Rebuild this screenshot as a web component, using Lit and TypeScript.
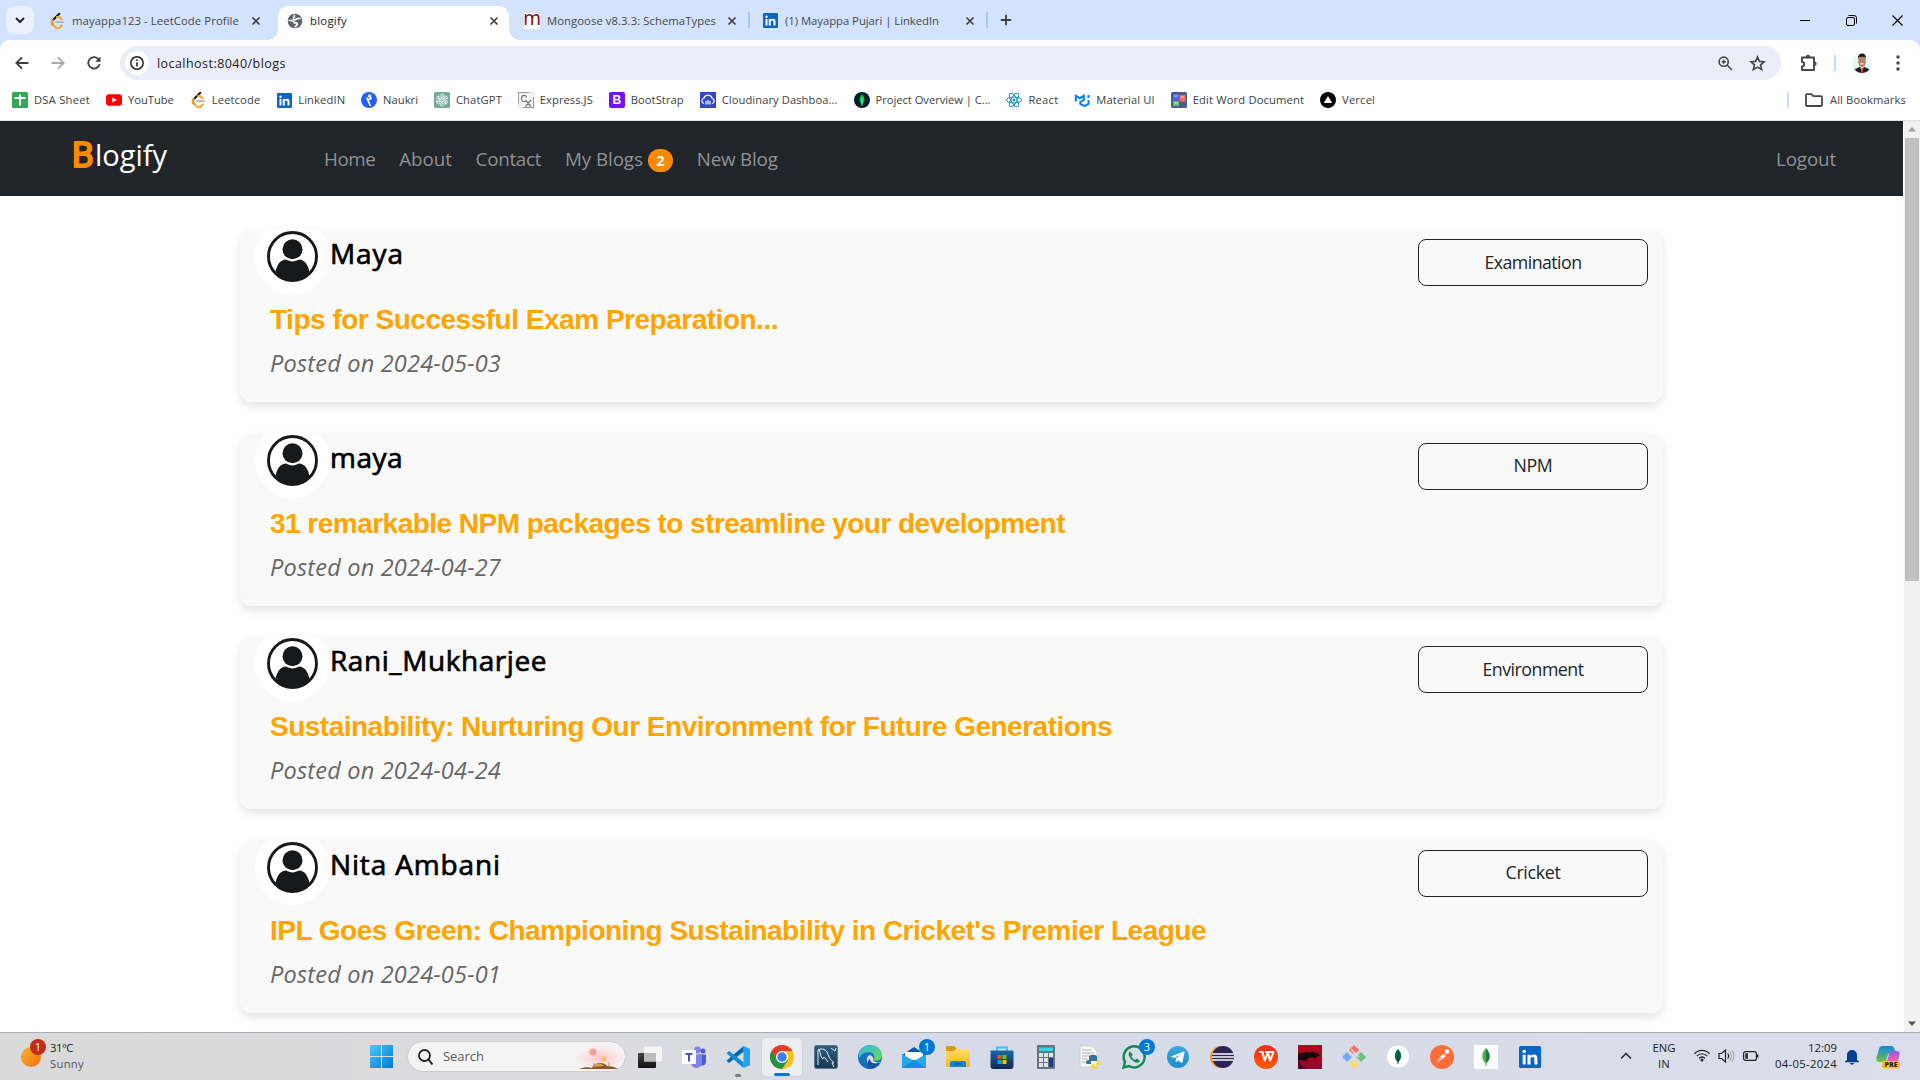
import { LitElement, html, css, svg, nothing, TemplateResult } from "lit";
import { customElement, property } from "lit/decorators.js";
import { styleMap } from "lit/directives/style-map.js";

/* Text set to an exact measure by spreading the remainder over its letters. */
@customElement("fit-text")
class FitText extends LitElement {
  @property() text = "";
  @property({ type: Number }) w = 0;
  static styles = css`
    :host { display: inline-block; white-space: pre; flex: none; }
  `;
  render() {
    return html`<span>${this.text}</span>`;
  }
  updated() {
    const s = this.renderRoot.querySelector("span") as HTMLElement;
    s.style.letterSpacing = "0px";
    const natural = s.getBoundingClientRect().width;
    s.style.letterSpacing = `${(this.w - natural) / this.text.length}px`;
    this.style.width = `${this.w}px`;
  }
}

const ic = (w: number, h: number, box: string, body: TemplateResult) =>
  html`<svg width=${w} height=${h} viewBox=${box} fill="none">${body}</svg>`;

const linkedin = svg`<rect width="24" height="24" rx="2" fill="#0a66c2"/><path d="M4 9.5h3.2V20H4z" fill="#fff"/><circle cx="5.6" cy="5.9" r="1.9" fill="#fff"/><path d="M9.2 9.5h3.1v1.5c.6-1 1.8-1.8 3.5-1.8 3.3 0 4.2 2 4.2 4.9V20h-3.2v-5.2c0-1.500-.3-2.800-2-2.800-1.800 0-2.300 1.200-2.300 2.800V20H9.200z" fill="#fff"/>`;
const leet = svg`<path d="M13 1 4.500 9.500c-1.500 1.600-1.500 4 0 5.500" stroke="#111" stroke-width="2.600" stroke-linecap="round"/><path d="M4.500 9.500c-1.600 1.700-1.500 4.200 0 5.700l3.700 3.700c1.500 1.500 4 1.500 5.500 0l2.300-2.300M16 8.300l-2.300-2.200c-1-1-2.500-1.400-3.800-1" stroke="#ffa116" stroke-width="2.600" stroke-linecap="round"/><path d="M9 12h9" stroke="#b3b3b3" stroke-width="2.400" stroke-linecap="round"/>`;

const icons: Record<string, TemplateResult> = {
  leet: ic(16, 16, "0 0 20 21", leet),
  globe: ic(16, 16, "0 0 16 16", svg`<circle cx="8" cy="8" r="7.300" fill="#5f6368"/><path d="M1.500 7.500h3.200c2 0 1.500 2 3 2.300 1.300.3 2.800.2 2.600 1.700-.2 1-1.800 1-2.300 2.800M7.500 2c-.3 1.700.2 1.800-.8 2.700-.8.800-.3 2 1 2.100 1.700.1 1.500-1.300 3-1.300h3" stroke="#fff" stroke-width="1.700"/>`),
  mongoose: html`<span class="moose">m</span>`,
  linkedin: ic(15, 15, "0 0 24 24", linkedin),
  sheet: ic(16, 16, "0 0 16 16", svg`<rect width="16" height="16" rx="1.500" fill="#34a853"/><path d="M8 2.500v11M2.500 6h11" stroke="#fff" stroke-width="2"/>`),
  youtube: ic(16, 16, "0 0 16 16", svg`<rect y="2.200" width="16" height="11.600" rx="3" fill="#f00"/><path d="m6.300 5.400 4.600 2.600-4.600 2.600z" fill="#fff"/>`),
  naukri: ic(16, 16, "0 0 16 16", svg`<circle cx="8" cy="8" r="8" fill="#275df5"/><circle cx="8.600" cy="4" r="1.700" fill="#fff"/><path d="M10.500 5.500c-1 2-3 1.500-3.500 3l2.500 5.500M7 8.500C6 7.500 6 6.500 6.500 5.500" stroke="#fff" stroke-width="1.700"/>`),
  gpt: ic(16, 16, "0 0 16 16", svg`<rect width="16" height="16" rx="1.500" fill="#74aa9c"/>${[0, 60, 120, 180, 240, 300].map((a) => svg`<path transform="rotate(${a} 8 8)" d="M6 7V4.200a2.200 2.200 0 0 1 3.800-1.400L7.500 4.500v3" stroke="#fff" stroke-width=".8"/>`)}`),
  express: ic(16, 16, "0 0 16 16", svg`<rect x=".5" y=".5" width="15" height="15" fill="#f3f3f3" stroke="#999"/><path d="M8.500 5.500c0-3-5-3-5 .8 0 3 2 3.700 4 3M7.500 8l5.500 6.500M13 8l-5.500 6.500" stroke="#777" stroke-width="1.200"/><path d="M11 0h5v5M0 11v5h5" stroke="#fff" stroke-width="1.500"/>`),
  bootstrap: html`<span class="boot">B</span>`,
  cloudinary: ic(16, 16, "0 0 16 16", svg`<rect width="16" height="16" fill="#3448c5"/><path d="M4 11.500a2.700 2.700 0 0 1-.2-5.200 4.400 4.400 0 0 1 8.400 0 2.700 2.700 0 0 1 0 5.200M6 9v3.500M8 8v4.500M10 9v3.500" stroke="#fff" stroke-width="1.200"/>`),
  mongo: ic(16, 16, "0 0 16 16", svg`<circle cx="8" cy="8" r="8" fill="#001e2b"/><path d="M8 2c3.500 4 3 8 0 11-3-3-3.500-7 0-11z" fill="#00c853"/><path d="M8 6v8" stroke="#b8f5cf" stroke-width=".7"/>`),
  react: ic(16, 16, "0 0 16 16", svg`<g stroke="#1d8fae" stroke-width="1"><ellipse cx="8" cy="8" rx="7.500" ry="2.900"/><ellipse cx="8" cy="8" rx="7.500" ry="2.900" transform="rotate(60 8 8)"/><ellipse cx="8" cy="8" rx="7.500" ry="2.900" transform="rotate(120 8 8)"/></g><circle cx="8" cy="8" r="1.500" fill="#1d8fae"/>`),
  mui: ic(16, 16, "0 0 16 16", svg`<path d="M1.800 9.500V3.700l4 2.500 4-2.500V8L6.300 10v2l4.200 2.200 4-2.300V8" stroke="#007fff" stroke-width="2"/><path d="M14.500 3v3" stroke="#007fff" stroke-width="2"/>`),
  word: ic(16, 16, "0 0 16 16", svg`<rect width="16" height="16" rx="1.500" fill="#47608a"/><rect x="2" y="2" width="6" height="6" fill="#4b6bf5"/><rect x="8.500" y="3" width="6" height="6.500" fill="#ff6a52"/><rect x="2" y="9" width="6" height="5" fill="#6dbb77"/><path d="M3.500 4h3M10 5h3M3.500 11h3" stroke="#fff" stroke-width=".8"/>`),
  vercel: ic(16, 16, "0 0 16 16", svg`<circle cx="8" cy="8" r="8" fill="#000"/><path d="m8 4 4.200 7H3.800z" fill="#fff"/>`),
  close: ic(10, 10, "0 0 10 10", svg`<path d="m1.500 1.500 7 7m0-7-7 7" stroke="#3c4043" stroke-width="1.700"/>`),
  plus: ic(12, 12, "0 0 12 12", svg`<path d="M6 .800v10.400M.800 6h10.400" stroke="#3c4043" stroke-width="1.800"/>`),
  chev: ic(10, 8, "0 0 10 8", svg`<path d="m1 2 4 4 4-4" stroke="#222" stroke-width="2"/>`),
  min: ic(11, 11, "0 0 11 11", svg`<path d="M0 5.500h10" stroke="#000"/>`),
  restore: ic(11, 11, "0 0 11 11", svg`<rect x=".5" y="2.500" width="8" height="8" rx="1.500" stroke="#000"/><path d="M2.500.500H8A2.500 2.500 0 0 1 10.500 3v5.500" stroke="#000"/>`),
  shut: ic(11, 11, "0 0 11 11", svg`<path d="m.500.500 10 10m0-10-10 10" stroke="#000" stroke-width="1.100"/>`),
  back: ic(14, 14, "0 0 14 14", svg`<path d="M13.500 7H1.500M7 1.300 1.300 7 7 12.700" stroke="#3c4043" stroke-width="1.800"/>`),
  fwd: ic(14, 14, "0 0 14 14", svg`<path d="M.5 7h12M7 1.300 12.700 7 7 12.700" stroke="#a6a9ad" stroke-width="1.800"/>`),
  reload: ic(14, 14, "0 0 14 14", svg`<path d="M12.600 8A5.700 5.700 0 1 1 11 2.800L13 5" stroke="#3c4043" stroke-width="1.800"/><path d="M13.500.500v5.300H8.200z" fill="#3c4043"/>`),
  info: ic(14, 14, "0 0 14 14", svg`<circle cx="7" cy="7" r="6.200" stroke="#222" stroke-width="1.500"/><path d="M7 6.200v4.300M7 3.500v1.600" stroke="#222" stroke-width="1.600"/>`),
  zoom: ic(15, 15, "0 0 15 15", svg`<circle cx="5.700" cy="5.700" r="4.600" stroke="#444746" stroke-width="1.600"/><path d="m9 9 5 5M5.700 3.700v4M3.700 5.700h4" stroke="#444746" stroke-width="1.600"/>`),
  star: ic(17, 17, "0 0 24 24", svg`<path d="m12 2.800 2.700 6.200 6.700.6-5.100 4.400 1.600 6.600-5.900-3.500-5.900 3.500L7.700 14 2.600 9.600l6.700-.6z" stroke="#444746" stroke-width="2.300"/>`),
  puzzle: ic(18, 18, "0 0 18 18", svg`<path d="M2 3.500h12V16H2v-3.600c2.800-.3 2.800-4.200 0-4.700z" stroke="#444746" stroke-width="1.900" stroke-linejoin="round"/><path d="M5.800 3a2.200 2.200 0 0 1 4.400 0zM14.500 7.500a2.200 2.200 0 0 1 0 4.400z" fill="#444746"/>`),
  me: ic(20, 20, "0 0 20 20", svg`<circle cx="10" cy="10" r="10" fill="#e6f8fb"/><path d="M2.500 16.500 7.500 14h5l5 2.500A10 10 0 0 1 2.500 16.500z" fill="#1a1b24"/><path d="m8 13 2 6 2-6z" fill="#fff"/><path d="m9.500 15h1.200l.5 4.700H9z" fill="#d33"/><ellipse cx="10" cy="8.600" rx="3.900" ry="5.500" fill="#bd8060"/><path d="M5.900 6.500C5-1.500 15-1.500 14.100 6.500l-.7-2c-2-.9-4.700-.9-6.800 0z" fill="#201714"/><path d="M8.200 10.800h3.600" stroke="#fff"/>`),
  dots: ic(4, 16, "0 0 4 16", svg`<g fill="#444746"><circle cx="2" cy="2" r="1.700"/><circle cx="2" cy="8" r="1.700"/><circle cx="2" cy="14" r="1.700"/></g>`),
  folder: ic(18, 14, "0 0 18 14", svg`<path d="M1.900 1.200h4.600l1.800 2h7.800c.6 0 .9.300.9.900v8c0 .6-.3.900-.9.900H1.900c-.6 0-.9-.3-.9-.9V2.100c0-.6.300-.9.900-.9z" stroke="#444746" stroke-width="1.800"/>`),
  user: ic(51, 51, "0 0 51 51", svg`<clipPath id="uc"><circle cx="25.500" cy="25.500" r="24.500"/></clipPath><circle cx="25.500" cy="25.500" r="24" stroke="#17181a" stroke-width="2.900"/><circle cx="25.500" cy="18.300" r="10" fill="#17181a"/><path clip-path="url(#uc)" d="M8 44c1.500-11 6-15.300 11-15.400 4 2.400 9 2.400 13 0 5 .1 9.500 4.400 11 15.400L36 51H15z" fill="#17181a"/>`),
  letterB: html`<svg class="initial" width="22" height="42" viewBox="0 0 22 42"><text x="-1.300" y="32" font-family="Roboto, sans-serif" font-size="35.500" font-weight="400" fill="#ff8a00" stroke="#ff8a00" stroke-width="1.800" stroke-linejoin="round">B</text></svg>`,
};

const g = (id: string, a: string, b: string, dir = "v") =>
  svg`<linearGradient id=${id} x1="0" y1="0" x2=${dir === "v" ? "0" : "1"} y2="1"><stop stop-color=${a}/><stop offset="1" stop-color=${b}/></linearGradient>`;

const leaf = (a: string, b: string) =>
  svg`<path d="M12 3c5.500 6 4.500 12 0 15.500z" fill=${b}/><path d="M12 3c-5.500 6-4.500 12 0 15.500z" fill=${a}/><path d="M12 18v3" stroke=${b} stroke-width=".8"/>`;

const apps: { body: TemplateResult; badge?: string; cls?: string }[] = [
  { body: svg`${g("tv", "#454545", "#111")}<rect y="8" width="18" height="15" rx="1" fill="url(#tv)"/><rect x="6" y="1.500" width="18" height="15" rx="1" fill="#fff" opacity=".75"/><path d="M6 8h12v8.500H6z" fill="#bdbdbd"/>` },
  { body: svg`<circle cx="15.500" cy="5" r="3.400" fill="#7b83eb"/><circle cx="21" cy="6" r="2.500" fill="#5059c9"/><path d="M17 9.500h7v7a4 4 0 0 1-4 4h-3z" fill="#5059c9"/><path d="M9 9.500h11V17a5.500 5.500 0 0 1-11 1z" fill="#7b83eb"/><rect y="5" width="14" height="14" rx="1" fill="#fff"/><path d="M3.500 9h7M7 9v7.500" stroke="#4b53bc" stroke-width="2"/>` },
  { cls: "run", body: svg`<path d="M17.500 1 24 3.800v16.400L17.500 23z" fill="#24a3ee"/><path d="m17.500 1 .1 5.700L3 18l-2.500-2.200z" fill="#0067b0"/><path d="m17.500 23 .1-5.700L3 6 .500 8.200z" fill="#128ad6"/>` },
  { cls: "active", body: svg`<circle cx="12" cy="12" r="12" fill="#fbc116"/><path d="M12 12 1.600 6A12 12 0 0 0 12 24l6-9z" fill="#229342"/><path d="M1.600 6A12 12 0 0 1 22.400 6H12L7 14.500z" fill="#e33b2e"/><circle cx="12" cy="12" r="6" fill="#fff"/><circle cx="12" cy="12" r="4.700" fill="#3b7ded"/>` },
  { body: svg`${g("my", "#2e5d7d", "#173a55")}<rect x=".5" y=".5" width="23" height="23" rx="2" fill="url(#my)" stroke="#53788f"/><path d="M4 20V5c3-2 7-1 9 2l2 5c1 3 4 4 5 6l-2 0 2 4M5 4c2 5 1 8 4 10 0-2 1-2 2-1l3 4M17 3l4 3 1-3" stroke="#e4edf2" stroke-width="1"/>` },
  { body: svg`<defs>${g("e1", "#32b8ea", "#69df48", "h")}${g("e2", "#1895db", "#1150a4")}</defs><circle cx="12" cy="12" r="12" fill="url(#e2)"/><path d="M1 8C4-2 22-3 24 10c0 5-5 7-9 5 3-3 1-8-4-8-5 0-9 3-10 7z" fill="url(#e1)"/><path d="M15 15c2 3 6 3 8 1-3 5-8 6-11 4-4-2-4-8-1-10 3 0 5 3 4 5z" fill="#d7dbe6"/><path d="M11 10c-6 3-4 12 3 13.700C9 25 1 20 2 13c1-4 6-5 9-3z" fill="#1a6fc0"/><path d="M12 14c0 4 5 6 10 3-2 5-7 6-9 5-4-2-4-6-1-8z" fill="#1452a3"/>` },
  { badge: "1", body: svg`<path d="m0 10 12-8 12 8v2L12 20 0 12z" fill="#0a5ca8"/><path d="M3 7h18v8H3z" fill="#fff"/><path d="m0 9 12 7 12-7v14H0z" fill="#28a8ea"/><path d="m0 23 12-8 12 8z" fill="#1490df"/>` },
  { body: svg`${g("fe", "#ffdc63", "#f8b526")}<path d="M0 2.500C0 1.500.5 1 1.500 1H8l3 3v4H0z" fill="#d99a12"/><path d="M0 6h8l2-2h14v16.500c0 1-.5 1.500-1.500 1.500h-21C.5 22 0 21.500 0 20.500z" fill="url(#fe)"/><path d="M4 22v-4c0-1.500 1-2 2-2h12c1 0 2 .5 2 2v4z" fill="#1b80d3"/><path d="M8 19h8" stroke="#0a589e" stroke-width="1.500"/>` },
  { body: svg`${g("ms", "#166aa9", "#13274f")}<path d="M7 6V2.500h10V6" stroke="#38c3f2" stroke-width="2"/><path d="M.5 5.500h23V21c0 2-1 3-3 3h-17c-2 0-3-1-3-3z" fill="url(#ms)"/><path d="M7.500 10h4v4h-4z" fill="#f25022"/><path d="M12.500 10h4v4h-4z" fill="#7fba00"/><path d="M7.500 15h4v4h-4z" fill="#00a4ef"/><path d="M12.500 15h4v4h-4z" fill="#ffb900"/>` },
  { body: svg`<rect x="3" width="18" height="24" rx="1" fill="#6a737b"/><path d="M5 2.500h14V6H5z" fill="#35d2f2"/><g fill="#e0e4e8">${[8, 13, 18].map((y) => svg`<path d="M5 ${y}h4v4H5zM10 ${y}h4v4h-4z"/>`)}<path d="M15 8h4v4h-4z"/></g><path d="M15 13h4v9h-4z" fill="#173e82"/>` },
  { body: svg`<path d="M2 1h12l5 5v16H2z" fill="#f6f6f4" stroke="#c5c5c5" stroke-width=".7"/><path d="M4 5h9M4 8h12M4 11h8M4 14h6M4 17h6" stroke="#b4b4b4"/><path d="M11 15v-3c0-3 8-3 8 0v4h-6v3H9c-2-1-1-4 2-4z" fill="#35709f"/><path d="M21 15v4c0 1-5 0-5 2h4v2c-2 1.500-7 1.500-7-1v-2c0-1 6 0 6-2v-3c4-1 5 5 2 5h-3" fill="#ffd33f"/>` },
  { badge: "3", body: svg`<path d="M1.500 22.500 3 17A10.500 10.500 0 1 1 7 21z" stroke="#168b50" stroke-width="2.500"/><path d="M8 6.500c-3 2-.500 6 2 8.500s6.500 4 8 1l-3-2.500-2 1.500c-1.500-.6-3-2.200-3.500-3.700l1.300-1.600z" fill="#168b50"/>` },
  { body: svg`${g("tg", "#35aade", "#1c8ec9")}<circle cx="12" cy="12" r="11" fill="url(#tg)"/><path d="m4.500 11.700 13-5.200c.8-.3 1.200.2 1 1L16.500 17c-.2.800-.8 1-1.500.500l-3-2.200-1.500 1.600c-.4.400-.8.200-.8-.400l.3-2.900 5.500-5-7 4.300-3.500-1.100c-.7-.2-.7-.8-.500-1.100z" fill="#fff"/>` },
  { body: svg`<circle cx="11" cy="12" r="11" fill="#f7941e"/><circle cx="13" cy="12" r="11" fill="#2c2255"/><path d="M2.200 9h21.600M2 12h22M2.200 15h21.600" stroke="#fff" stroke-width="1.600"/>` },
  { body: svg`${g("wp", "#f62a20", "#ff5a00")}<circle cx="12" cy="12" r="12" fill="url(#wp)"/><path d="M5 7h3.500l2 8.500L14 8l2 7.500L19.500 7H11" stroke="#fff" stroke-width="2" stroke-linejoin="round"/>` },
  { body: svg`${g("kd", "#ba0418", "#8e0b2d")}<path d="M0 0h24v24H0z" fill="url(#kd)"/><path d="M0 8.500 8 7l4 .5 3-1.500.5 1.500 5.500.5-1 1 2 2-4 .5 1 1.500-5-.5c-4 0-4 1-6 2l3 1.500-6-.5-5-.5z" fill="#17060b"/><path d="M0 14c2 4 3 7 8 10H0z" fill="#4b0930"/>` },
  { body: svg`<path d="m12 0 5 5-5 5-5-5z" fill="#f66d62"/><path d="m5 7 5 5-5 5-5-5z" fill="#73a9fb"/><path d="m19 7 5 5-5 5-5-5z" fill="#70c176"/><path d="m12 14 5 5-5 5-5-5z" fill="#fbdc67"/><path d="m9 4 4 4 4 4M12 7v12" stroke="#d7dce8" stroke-width="1.500"/>` },
  { body: svg`<circle cx="12" cy="11.500" r="11" fill="#fff"/><path d="M12 4c4.500 4.500 4 10 0 13.500-4-3.500-4.500-9 0-13.500z" fill="#00684a"/><path d="M12 7v12" stroke="#0a3d2e" stroke-width=".8"/>` },
  { body: svg`<circle cx="12" cy="12" r="12" fill="#ff6c37"/><path d="m6 18 5-7c2-3 5-2 4.500.5L8 17z" fill="#fff"/><circle cx="17" cy="6.500" r="2.300" fill="#fff"/><path d="M5.500 19 12 12" stroke="#ff6c37" stroke-width=".8"/>` },
  { body: svg`<path d="M0 0h24v24H0z" fill="#fff"/>${leaf("#4caf50", "#1f7a34")}` },
  { body: svg`<g transform="translate(1 1) scale(.92)">${linkedin}</g>` },
];

const tabs = [
  { icon: "leet", text: "mayappa123 - LeetCode Profile", tw: 167, w: 244 },
  { icon: "globe", text: "blogify", tw: 37, w: 231, on: true },
  { icon: "mongoose", text: "Mongoose v8.3.3: SchemaTypes", tw: 169, w: 241, bar: true },
  { icon: "linkedin", text: "(1) Mayappa Pujari | LinkedIn", tw: 154, w: 238, bar: true },
];

const bookmarks: [string, string, number][] = [
  ["sheet", "DSA Sheet", 56],
  ["youtube", "YouTube", 46],
  ["leet", "Leetcode", 48.5],
  ["linkedin", "LinkedIN", 47],
  ["naukri", "Naukri", 35],
  ["gpt", "ChatGPT", 46],
  ["express", "Express.JS", 53],
  ["bootstrap", "BootStrap", 53],
  ["cloudinary", "Cloudinary Dashboa...", 116],
  ["mongo", "Project Overview | C...", 115],
  ["react", "React", 30],
  ["mui", "Material UI", 58.5],
  ["word", "Edit Word Document", 111.5],
  ["vercel", "Vercel", 33],
];

const posts = [
  { name: "Maya", nw: 74, title: "Tips for Successful Exam Preparation...", tw: 508, date: "2024-05-03", tag: "Examination", gw: 97 },
  { name: "maya", nw: 73, title: "31 remarkable NPM packages to streamline your development", tw: 795, date: "2024-04-27", tag: "NPM", gw: 39 },
  { name: "Rani_Mukharjee", nw: 217, title: "Sustainability: Nurturing Our Environment for Future Generations", tw: 842, date: "2024-04-24", tag: "Environment", gw: 101 },
  { name: "Nita Ambani", nw: 171, title: "IPL Goes Green: Championing Sustainability in Cricket's Premier League", tw: 936, date: "2024-05-01", tag: "Cricket", gw: 55 },
];

const links: [string, number, string?][] = [
  ["Home", 51.5],
  ["About", 52.5],
  ["Contact", 65.5],
  ["My Blogs", 78, "2"],
  ["New Blog", 81],
];

const t = (text: string, w: number) => html`<fit-text .text=${text} .w=${w}></fit-text>`;

@customElement("app-root")
class AppRoot extends LitElement {
  static styles = css`
    :host {
      display: flex; flex-direction: column; width: 1920px; height: 1080px; overflow: hidden;
      background: #fff; font-family: "Open Sans", "Noto Sans", sans-serif; color: #202124;
    }
    * { box-sizing: border-box; }
    svg { display: block; flex: none; }
    .strip { display: flex; height: 40px; background: #d3e2fd; flex: none; }
    .drop { width: 28px; height: 28px; margin: 6px 0 0 6px; border-radius: 9px; background: #ebf1fe; display: grid; place-items: center; }
    .tab { display: flex; align-items: center; height: 34px; margin-top: 6px; padding: 0 17px 5px 15px; gap: 7px; font-size: 11.3px; color: #45484c; position: relative; }
    .tab > .ico { width: 16px; display: grid; place-items: center; }
    .tab .x { margin-left: auto; }
    .tab.on { background: #fff; border-radius: 10px 10px 0 0; padding: 0 10px 5px 9px; color: #202124; }
    .tab.on::before, .tab.on::after { content: ""; position: absolute; bottom: 0; width: 10px; height: 10px; }
    .tab.on::before { left: -10px; background: radial-gradient(circle at 0 0, transparent 9.500px, #fff 10px); }
    .tab.on::after { right: -10px; background: radial-gradient(circle at 100% 0, transparent 9.500px, #fff 10px); }
    .tab.bar { padding-right: 13px; }
    .tab.bar::after { content: ""; position: absolute; right: 0; top: 6px; width: 2px; height: 16px; background: #a8c7fa; }
    .tab.bar + .tab.bar { padding-left: 12px; }
    .moose { width: 16px; height: 16px; background: #fff; color: #8a0f0f; font: 400 19px/11px "Noto Sans", sans-serif; display: flex; justify-content: center; }
    .add { margin: 14px 0 0 12px; }
    .win { margin: 15px 17px 0 auto; display: flex; gap: 35px; }
    .tools { background: #d3e2fd; flex: none; }
    .bar-row { display: flex; align-items: center; height: 46px; background: #fff; border-radius: 10px 10px 0 0; padding: 0 20px 0 15px; }
    .nav-ic { display: flex; gap: 22px; width: 105px; }
    .omni { display: flex; align-items: center; width: 1662px; height: 34px; border-radius: 17px; background: #ebeef8; padding: 0 15px 0 5px; font-size: 12.500px; }
    .site { width: 24px; height: 24px; background: #fff; border-radius: 12px; display: grid; place-items: center; margin-right: 8px; }
    .omni .zm { margin: 0 16px 0 auto; }
    .right { display: flex; align-items: center; margin-left: 19px; }
    .sep { width: 2px; height: 16px; background: #c9dcfb; }
    .right .sep { margin: 0 16px 0 16px; }
    .right .dots { margin-left: 24px; }
    .marks { display: flex; align-items: center; height: 35px; background: #fff; border-bottom: 1px solid #dfe3e4; padding: 0 14px 6px 12px; gap: 15.900px; font-size: 11.2px; color: #3b3e42; flex: none; }
    .mark { display: flex; align-items: center; gap: 6px; }
    .mark fit-text, .all fit-text { margin-top: -2px; }
    .mark .ico { width: 16px; display: grid; place-items: center; }
    .boot { width: 16px; height: 16px; border-radius: 2px; background: #7411f5; color: #fff; font: 700 12px/16px "Liberation Sans", sans-serif; text-align: center; }
    .all { margin-left: auto; display: flex; align-items: center; }
    .all .sep { margin-right: 16px; }
    .all fit-text { margin-left: 7px; }
    .view { display: flex; flex: 1; min-height: 0; }
    .page { flex: 1; overflow: hidden; }
    .scroll { width: 17px; background: #f1f1f1; display: flex; flex-direction: column; align-items: center; border-left: 1px solid #fafafa; }
    .thumb { width: 14px; height: 443px; background: #c1c1c1; margin-bottom: auto; }
    .up { margin: 6px 0; }
    .down { margin-bottom: 6px; }
    .navbar { height: 75px; background: #212529; display: flex; padding: 0 67px 0 73px; color: #909294; font-size: 18.800px; line-height: 28px; }
    .brand { display: flex; width: 251px; color: #fff; font-size: 29px; line-height: 40px; padding-top: 14px; }
    .initial { overflow: visible; }
    .menu { display: flex; gap: 23.800px; padding-top: 24px; flex: 1; }
    .menu > span { display: flex; }
    .badge { width: 25px; height: 23px; margin: 4px 0 0 5px; border-radius: 12px; background: #ff8a00; color: #fff; font-size: 14px; font-style: normal; font-weight: 700; line-height: 23px; text-align: center; }
    .out { margin-left: auto; }
    .list { display: flex; flex-direction: column; gap: 30.500px; width: 1423px; margin: 33px 0 0 240px; }
    .card { height: 173px; flex: none; overflow: hidden; border-radius: 12px; background: #f9f9f9; }
    .shade { border-radius: 12px; box-shadow: 0 5px 10px rgba(0, 0, 0, .1); }
    .head { display: flex; align-items: flex-start; padding: 0 15px; height: 65px; }
    .ava { width: 75px; height: 75px; border-radius: 50%; background: #fff; margin-top: -10px; display: grid; place-items: center; flex: none; }
    .name { font-size: 28px; font-weight: 500; line-height: 40px; margin: 4px 0 0 0; color: #000; -webkit-text-stroke: .7px #000; }
    .tag { margin: 10px 0 0 auto; width: 230px; height: 47px; border: 1px solid #212529; border-radius: 8px; display: grid; place-items: center; font-size: 17.800px; color: #212529; padding-bottom: 2px; }
    .title { margin-left: 30px; font: 700 28px/34px "Liberation Sans", sans-serif; color: #ffa500; margin-top: 9px; }
    .date { margin-left: 30px; margin-top: 8px; font-size: 23.500px; line-height: 36px; font-style: italic; color: #666; }
    .task { height: 48px; flex: none; border-top: 1px solid #aaacb3; background: linear-gradient(90deg, #d9d9d9, #dcdcdf 30%, #d6dbe8 50%, #d8dce8 75%, #d9deea); display: flex; align-items: center; font-size: 11.3px; line-height: 16px; padding: 0 19px 0 20px; }
    .weather { display: flex; width: 350px; gap: 8px; }
    .wx { position: relative; width: 22px; height: 30px; }
    .sun { position: absolute; left: 1px; top: 5px; width: 20px; height: 20px; border-radius: 50%; background: linear-gradient(135deg, #f3b32c, #f36d12); }
    .num { position: absolute; width: 16px; height: 16px; border-radius: 50%; color: #fff; font-size: 11px; line-height: 16px; text-align: center; }
    .wx .num { left: 10px; top: -3px; background: #c42b1c; }
    .col { display: flex; flex-direction: column; color: #1b1b1b; margin-top: -2px; }
    .col .dim { color: #555; }
    .find { display: flex; align-items: center; width: 219px; height: 31px; margin-left: 14px; border-radius: 16px; background: #f4f4f5; border: 1px solid #cdcdd0; padding-left: 10px; color: #5c5c5c; font-size: 13px; overflow: hidden; }
    .find fit-text { margin: -2px 0 0 10px; }
    .find .art { margin-left: auto; }
    .apps { display: flex; margin-left: 4px; gap: 4px; }
    .app { position: relative; width: 40px; height: 40px; display: grid; place-items: center; border-radius: 4px; }
    .app.active { background: #eceef2; box-shadow: 0 0 1px #aaa; height: 38px; margin-top: 1px; }
    .app.active::after, .app.run::after { content: ""; position: absolute; bottom: 0; height: 3px; border-radius: 2px; width: 16px; background: #0a76d6; }
    .app.run::after { width: 6px; background: #7a7c80; }
    .app .num { left: 25px; top: 2px; background: #0078d4; }
    .tray { margin-left: auto; display: flex; align-items: center; color: #111; }
    .tray > svg { margin-top: -1px; }
    .tray .lang { width: 40px; margin-left: 12px; align-items: center; }
    .tray .clock { align-items: flex-end; width: 78px; }
    .status { display: flex; gap: 8px; margin: -2px 0 0 10px; align-items: center; }
    .bell { margin-left: 8px; }
    .pilot { margin-left: 17px; }
  `;

  render() {
    return html`
      <div class="strip">
        <div class="drop">${icons.chev}</div>
        ${tabs.map((x) => html`
          <div class="tab ${x.on ? "on" : ""} ${x.bar ? "bar" : ""}" style=${styleMap({ width: x.w + "px" })}>
            <span class="ico">${icons[x.icon]}</span>${t(x.text, x.tw)}<span class="x">${icons.close}</span>
          </div>`)}
        <span class="add">${icons.plus}</span>
        <div class="win">${icons.min}${icons.restore}${icons.shut}</div>
      </div>
      <div class="tools">
        <div class="bar-row">
          <div class="nav-ic">${icons.back}${icons.fwd}${icons.reload}</div>
          <div class="omni">
            <span class="site">${icons.info}</span>${t("localhost:8040/blogs", 129)}
            <span class="zm">${icons.zoom}</span>${icons.star}
          </div>
          <div class="right">${icons.puzzle}<span class="sep"></span>${icons.me}<span class="dots">${icons.dots}</span></div>
        </div>
      </div>
      <div class="marks">
        ${bookmarks.map(([i, s, w]) => html`<span class="mark"><span class="ico">${icons[i]}</span>${t(s, w)}</span>`)}
        <span class="all"><span class="sep"></span>${icons.folder}${t("All Bookmarks", 76)}</span>
      </div>
      <div class="view">
        <div class="page">
          <nav class="navbar">
            <div class="brand">${icons.letterB}${t("logify", 72)}</div>
            <div class="menu">
              ${links.map(([s, w, n]) => html`<span>${t(s, w)}${n ? html`<i class="badge">${n}</i>` : nothing}</span>`)}
              <span class="out">${t("Logout", 60)}</span>
            </div>
          </nav>
          <div class="list">
            ${posts.map((p) => html`
              <div class="shade"><article class="card">
                <div class="head">
                  <span class="ava">${icons.user}</span>
                  <span class="name">${t(p.name, p.nw)}</span>
                  <span class="tag">${t(p.tag, p.gw)}</span>
                </div>
                <div class="title">${t(p.title, p.tw)}</div>
                <div class="date">${t("Posted on " + p.date, 231)}</div>
              </article></div>`)}
          </div>
        </div>
        <div class="scroll">
          <span class="up">${ic(8, 5, "0 0 8 5", svg`<path d="m4 0 4 4.500H0z" fill="#a3a3a3"/>`)}</span>
          <span class="thumb"></span>
          <span class="down">${ic(8, 5, "0 0 8 5", svg`<path d="M4 5 0 .500h8z" fill="#505050"/>`)}</span>
        </div>
      </div>
      <div class="task">
        <div class="weather">
          <div class="wx"><span class="sun"></span><span class="num">1</span></div>
          <div class="col">${t("31°C", 23)}<span class="dim">${t("Sunny", 34)}</span></div>
        </div>
        ${ic(23, 23, "0 0 23 23", svg`${g("win", "#4cc8fb", "#0078d4", "h")}<path d="M0 0h11v11H0zM12 0h11v11H12zM0 12h11v11H0zM12 12h11v11H12z" fill="url(#win)"/>`)}
        <div class="find">
          ${ic(15, 16, "0 0 15 16", svg`<circle cx="6.500" cy="6.500" r="5.500" stroke="#222" stroke-width="1.800"/><path d="m10.500 10.500 4 5" stroke="#222" stroke-width="2"/>`)}
          ${t("Search", 41)}
          <span class="art">${ic(50, 30, "0 0 50 30", svg`<radialGradient id="ar"><stop stop-color="#ffc9c9"/><stop offset="1" stop-color="#ffc9c9" stop-opacity="0"/></radialGradient><ellipse cx="25" cy="16" rx="25" ry="13" fill="url(#ar)"/><circle cx="18" cy="10" r="3.600" fill="#fb9a9a"/><circle cx="29" cy="17" r="2.700" fill="#fdbd71"/><path d="M4 27c5-2 10-2 13-1 2-5 11-7 15-2 4 0 8 1 11 3z" fill="#8d5527"/><path d="M18 25c2-4 8-5 11-1z" fill="#d59b57"/><path d="M19 21v5M34 20v6" stroke="#b3773d" stroke-width=".7"/>`)}</span>
        </div>
        <div class="apps">
          ${apps.map((a) => html`<div class="app ${a.cls ?? ""}">${ic(24, 24, "0 0 24 24", a.body)}${a.badge ? html`<span class="num">${a.badge}</span>` : nothing}</div>`)}
        </div>
        <div class="tray">
          ${ic(12, 8, "0 0 12 8", svg`<path d="m1 6.500 5-5 5 5" stroke="#222" stroke-width="1.500"/>`)}
          <div class="col lang">${t("ENG", 23)}${t("IN", 12)}</div>
          <div class="status">
            ${ic(16, 13, "0 0 16 13", svg`<path d="M.500 4.800c4-4.700 11-4.700 15 0M2.800 7.200c3-3.300 7.400-3.300 10.400 0M5 9.500c2-2 4-2 6 0" stroke="#222" stroke-width="1.200"/><circle cx="8" cy="11" r="1.500" fill="#222"/>`)}
            ${ic(17, 14, "0 0 17 14", svg`<path d="M1 4.500h2.500L7.500 1v12l-4-3.500H1z" stroke="#222" stroke-width="1.200"/><path d="M9.700 4.500c1.200 1.500 1.200 3.500 0 5" stroke="#222" stroke-width="1.200"/><path d="M11.700 2.500c2.400 2.500 2.400 6.500 0 9M13.700 1c3 3.500 3 8.500 0 12" stroke="#aaa" stroke-width="1.100"/>`)}
            ${ic(16, 10, "0 0 16 10", svg`<rect x=".600" y=".600" width="12.800" height="8.800" rx="2" stroke="#222" stroke-width="1.200"/><rect x="2.300" y="2.300" width="2.500" height="5.400" fill="#222"/><path d="M14.500 3.500v3" stroke="#222" stroke-width="1.800"/>`)}
          </div>
          <div class="col clock">${t("12:09", 29)}${t("04-05-2024", 62)}</div>
          <div class="bell">${ic(14, 16, "0 0 14 16", svg`<path d="M2 11V6a5 5 0 0 1 10 0v5l2 1.500v.8H0v-.8zM4.500 14h5L7 16z" fill="#003e92"/>`)}</div>
          <div class="pilot">${ic(25, 25, "0 0 25 25", svg`<defs>${g("c1", "#1786e0", "#6fc04a")}${g("c2", "#8a5cf0", "#f45fa2")}</defs><path d="M6 2h9c2 0 3 1 3.500 3L20 9h-5c-2 0-3 1-3.500 3l-1 3c-.5 2-1.500 3-3.500 3H3c-3 0-3-3-2-6l2-7c.5-2 1.500-3 3-3z" fill="url(#c1)"/><path d="M15 7h6c3 0 3 3 2 6l-1 4H9c2 0 2.500-1 3-3l1-4c.4-2 1-3 2-3z" fill="url(#c2)"/><rect x="6" y="17" width="18" height="7.500" rx="1.500" fill="#ffc20e"/><text x="15" y="23.200" text-anchor="middle" font-size="7" font-weight="800" fill="#222" font-family="Open Sans">PRE</text>`)}</div>
        </div>
      </div>
    `;
  }
}
